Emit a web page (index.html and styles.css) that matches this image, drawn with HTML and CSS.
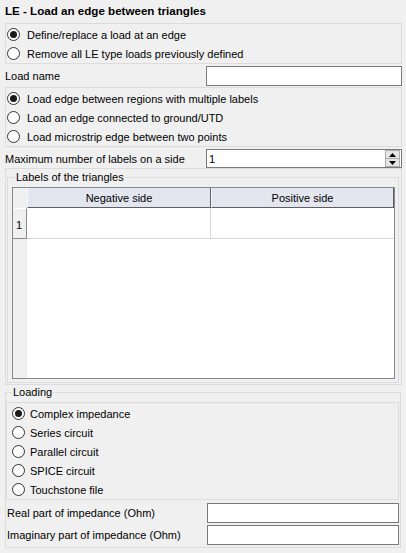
FILE: index.html
```html
<!DOCTYPE html>
<html>
<head>
<meta charset="utf-8">
<link rel="stylesheet" href="styles.css">
</head>
<body>
<div class="page">
  <div class="title">LE - Load an edge between triangles</div>

  <div class="box">
    <div class="radio"><span class="circle on"></span><span>Define/replace a load at an edge</span></div>
    <div class="radio"><span class="circle"></span><span>Remove all LE type loads previously defined</span></div>
  </div>

  <div class="field">
    <span class="label">Load name</span>
    <div class="input"></div>
  </div>

  <div class="box">
    <div class="radio"><span class="circle on"></span><span>Load edge between regions with multiple labels</span></div>
    <div class="radio"><span class="circle"></span><span>Load an edge connected to ground/UTD</span></div>
    <div class="radio"><span class="circle"></span><span>Load microstrip edge between two points</span></div>
  </div>

  <div class="field spin-field">
    <span class="label">Maximum number of labels on a side</span>
    <div class="input spin">
      <span class="spin-value">1</span>
      <div class="spin-btns">
        <div class="spin-btn"><svg width="7" height="4" viewBox="0 0 7 4"><path d="M3.5 0 L7 4 L0 4 Z" fill="#000"/></svg></div>
        <div class="spin-btn"><svg width="7" height="4" viewBox="0 0 7 4"><path d="M0 0 L7 0 L3.5 4 Z" fill="#000"/></svg></div>
      </div>
    </div>
  </div>

  <div class="panel">
    <fieldset class="group labels-group">
      <legend>Labels of the triangles</legend>
      <div class="table">
        <div class="corner"></div>
        <div class="th">Negative side</div>
        <div class="th">Positive side</div>
        <div class="rh">1</div>
        <div class="td td-first"></div>
        <div class="td"></div>
        <div class="rh-rest"></div>
        <div class="empty"></div>
      </div>
    </fieldset>
  </div>

  <fieldset class="group loading-group">
    <legend>Loading</legend>
    <div class="box inner-box">
      <div class="radio"><span class="circle on"></span><span>Complex impedance</span></div>
      <div class="radio"><span class="circle"></span><span>Series circuit</span></div>
      <div class="radio"><span class="circle"></span><span>Parallel circuit</span></div>
      <div class="radio"><span class="circle"></span><span>SPICE circuit</span></div>
      <div class="radio"><span class="circle"></span><span>Touchstone file</span></div>
    </div>
    <div class="field inner-field first">
      <span class="label">Real part of impedance (Ohm)</span>
      <div class="input"></div>
    </div>
    <div class="field inner-field">
      <span class="label">Imaginary part of impedance (Ohm)</span>
      <div class="input"></div>
    </div>
  </fieldset>
</div>
</body>
</html>
```

FILE: styles.css
```css
* { box-sizing: border-box; }
html, body {
  margin: 0;
  padding: 0;
  background: #f0f0f0;
}
body {
  font-family: "Liberation Sans", Arial, sans-serif;
  font-size: 11px;
  color: #000;
  width: 406px;
  height: 553px;
  overflow: hidden;
}
.page {
  padding: 0 4px 0 5px;
  display: flex;
  flex-direction: column;
}
.title {
  height: 23px;
  line-height: 22px;
  font-weight: bold;
  font-size: 11.6px;
}
.box {
  border: 1px solid #dcdcdc;
  padding: 1px 0 0 0;
  display: flex;
  flex-direction: column;
}
.radio {
  height: 19px;
  display: flex;
  align-items: center;
  padding-left: 1px;
}
.circle {
  width: 13px;
  height: 13px;
  border: 1px solid #333;
  border-radius: 50%;
  background: #fff;
  margin-right: 7px;
  display: flex;
  align-items: center;
  justify-content: center;
  flex: none;
}
.circle.on::after {
  content: "";
  width: 7px;
  height: 7px;
  border-radius: 50%;
  background: #1a1a1a;
}
.field {
  display: flex;
  align-items: center;
  padding: 2px 0 1px 0;
}
.field .label {
  width: 201px;
  flex: none;
}
.input {
  width: 196px;
  height: 20px;
  border: 1px solid #7a7a7a;
  background: #fff;
}
.spin-field { padding: 2px 0 0 0; }
.spin {
  height: 19px;
  display: flex;
  align-items: center;
  justify-content: space-between;
  padding-left: 2px;
}
.spin-btns {
  width: 15px;
  height: 17px;
  display: flex;
  flex-direction: column;
  margin-right: 1px;
}
.spin-btn {
  flex: 1;
  background: #e5e5e5;
  border: 1px solid #acacac;
  display: flex;
  align-items: center;
  justify-content: center;
}
.spin-btn + .spin-btn { border-top: none; }
.panel {
  border: 1px solid #dcdcdc;
  padding: 1px 2px 1px 1px;
}
.group {
  margin: 0;
  border: 1px solid #dcdcdc;
  min-width: 0;
}
.group legend {
  padding: 0 1px;
  line-height: 14px;
  height: 14px;
}
.labels-group {
  padding: 3px 3px 3px 4px;
}
.labels-group legend { margin-left: 3px; }
.table {
  height: 192px;
  border: 1px solid #828790;
  background: #fff;
  display: grid;
  grid-template-columns: 14px 184px 1fr;
  grid-template-rows: 20px 31px 1fr;
}
.corner {
  background: #f0f0f0;
  border-right: 1px solid #f0f0f0;
}
.th {
  background: #e3e6ee;
  border-right: 1px solid #5f5f5f;
  border-bottom: 1px solid #5f5f5f;
  border-left: 1px solid #f7f8fb;
  display: flex;
  align-items: center;
  justify-content: center;
  padding-top: 1px;
}
.rh {
  background: #f0f0f0;
  border-right: 1px solid #8a8a8a;
  border-bottom: 1px solid #8a8a8a;
  border-top: 1px solid #fff;
  display: flex;
  align-items: center;
  padding-left: 3px;
  padding-top: 2px;
}
.td {
  border-bottom: 1px solid #d8d8d8;
}
.td-first { border-right: 1px solid #d8d8d8; }
.rh-rest { background: #f0f0f0; }
.empty { grid-column: 2 / 4; }
.loading-group {
  margin: 0 1px 0 0;
  padding: 3px 1px 2px 0;
}
.loading-group legend { margin-left: 6px; }
.inner-box .radio { padding-left: 5px; }
.inner-box .circle { margin-right: 5px; }
.inner-field {
  padding: 2px 0 0 1px;
}
.inner-field.first { padding-top: 3px; }
.inner-field .label { width: 200px; }
.inner-field .input { width: 193px; }
```
